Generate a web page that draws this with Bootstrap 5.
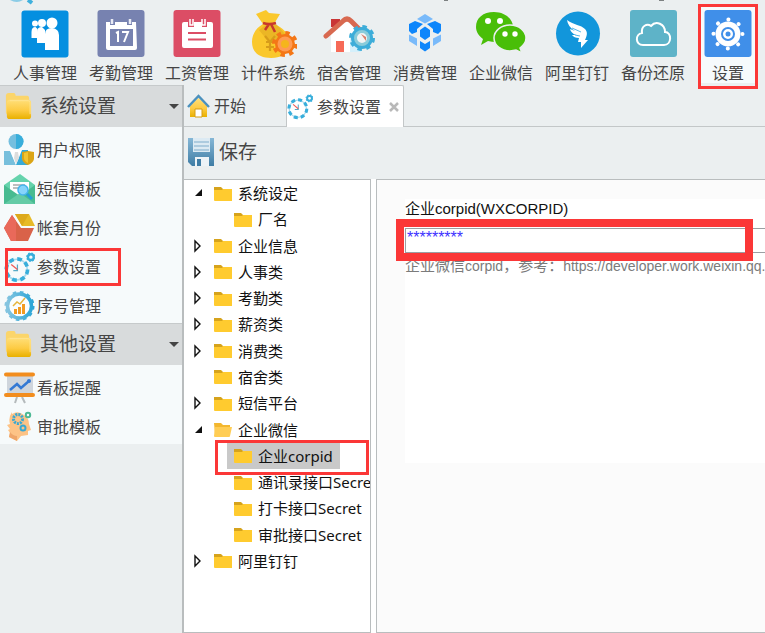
<!DOCTYPE html>
<html lang="zh-CN">
<head>
<meta charset="utf-8">
<meta name="viewport" content="width=device-width, initial-scale=1">
<title>参数设置</title>
<link href="https://cdn.jsdelivr.net/npm/bootstrap@5.3.0/dist/css/bootstrap.min.css" rel="stylesheet">
<style>
:root { --ui: "Noto Sans", "Noto Sans CJK SC", sans-serif; --line: #b9bdbe; --alert: #fb3737; }
body { font-family: var(--ui); font-size: 16px; line-height: 20px; color: #454545; background: #ebeff0; overflow: hidden; }
button, input { font: inherit; color: inherit; }
svg { display: block; flex: none; }
.plain { border: 0; background: none; padding: 0; color: inherit; white-space: nowrap; }
.marked { position: relative; }
.marked::after { content: ""; position: absolute; border: 3px solid var(--alert); pointer-events: none; z-index: 3; }
.topbar { position: relative; padding: 10px 0 0 7px; height: 85px; }
.topbar .tool { width: 76px; flex: none; }
.topbar .tool svg { margin: 0 auto 5px; }
.topbar .tool.marked { width: 60px; background: #f6fafc; margin: -6px 0 0 7px; padding-top: 6px; }
.topbar .marked::after { inset: 0 0 -6px; }
.scraps { position: absolute; left: 0; top: 0; pointer-events: none; }
.side { width: 184px; flex: none; border-right: 2px solid var(--line); }
.side-head { height: 42px; background: #d8dbdc; border-top: 1px solid #c6cacb; font-size: 19px; padding: 0 3px 2px 4px; }
.side-head + ul { background: #f6fafb; padding-bottom: 1px !important; }
.side-head svg.fold { margin-right: 7px; }
.side li button { height: 39px; padding: 7px 0 0 4px; }
.side li svg { margin-right: 2px; }
.side .marked::after { inset: 4px auto -3px 5px; width: 116px; }
.tabs { height: 42px; border-bottom: 1px solid #c3c7c8; }
.tab-item { height: 42px; }
.tab-item.current { background: #fff; border: 1px solid #c3c7c8; border-bottom: 0; border-radius: 2px 2px 0 0; }
.home { width: 102px; padding-left: 3px; }
.savebar { height: 52px; font-size: 19px; padding: 0 4px 3px; }
.panels { background: #fff; min-height: 0; }
.tree { width: 187px; flex: none; border: 1px solid var(--line); border-left: 0; overflow: hidden; color: #111; font-size: 15px; }
.tree ul { display: grid; grid-template: repeat(15, 1fr) / minmax(0, 1fr); height: 394px; }
.tree li { display: flex; align-items: center; min-height: 0; }
.twist { width: 18px; height: 20px; flex: none; margin: 0 5px; }
.node { display: flex; align-items: center; gap: 6px; height: 26px; padding: 0 7px 0 2px; }
.child { margin-left: 43px; }
.node.child { padding-left: 7px; }
.picked { background: #c9c9c9; }
.tree .marked::after { inset: -3px 1px -6px 31px; }
.detail { margin-left: 5px; border: 1px solid var(--line); border-right: 0; background: #fbfbfb; padding: 19px 0 0 28px; }
.form-area { background: #fff; height: 264px; font: 15px/20px "Liberation Sans", "Noto Sans CJK SC", sans-serif; }
.form-area label { color: #111; display: block; height: 29px; }
.field { position: relative; width: 110%; }
.field input { display: block; width: 100%; height: 25px; border: 1px solid #9b9fa3; border-radius: 0; padding: 0 1px 5px; color: #3c32ff; font-size: 16px; background: #fff; }
.focus-frame { position: absolute; inset: -9px 48px -8px -9px; border: 8px solid var(--alert); pointer-events: none; }
.hint { color: #7b7b7b; margin-top: 3px; white-space: nowrap; }
.hint span { font-size: 14px; }
.form-box { min-width: 0; }
</style>
</head>
<body class="vh-100 d-flex flex-column">
<svg width="0" height="0" class="position-absolute" aria-hidden="true">
  <defs>
    <linearGradient id="gold" x2="0" y2="1"><stop stop-color="#ffdf79"/><stop offset=".55" stop-color="#fdcb43"/><stop offset="1" stop-color="#e8b000"/></linearGradient>
    <linearGradient id="steel" x2="0" y2="1"><stop stop-color="#86b7d6"/><stop offset="1" stop-color="#3f7da5"/></linearGradient>
    <linearGradient id="sky" x2="1"><stop stop-color="#85c5e0"/><stop offset="1" stop-color="#2ca6d7"/></linearGradient>
    <symbol id="bigfolder" viewBox="0 0 30 30"><path d="M2 5q0-3 3-3h5q2 0 2 3h12q2 0 2 3v17H4q-2-1-2-3z" fill="#fbd56a"/><rect x="3" y="9" width="25" height="20" rx="3" fill="url(#gold)"/><path d="M6 10h19q2 0 2 2v12" fill="none" stroke="#ffe491"/></symbol>
    <symbol id="folder" viewBox="0 0 18 15"><path d="M0 1h7l2 2h8v4H0z" fill="#d6a31c"/><path d="M0 4h8l1-1h9v12H1q-1 0-1-1z" fill="#ffcb2f"/></symbol>
    <symbol id="folderopen" viewBox="0 0 18 15"><path d="M0 1h7l2 2h7v9H1z" fill="#f3b72f"/><path d="M1 5h17l-2 9q0 1-1 1H1q-1 0-1-1z" fill="#ffcd54"/></symbol>
    <symbol id="shut" viewBox="0 0 18 20"><path d="M6 5v10l5-5z" fill="#fff" stroke="#111" stroke-width="1.4"/></symbol>
    <symbol id="open" viewBox="0 0 18 20"><path d="M13 6v7H6z" fill="#111"/></symbol>
    <symbol id="clockgear" viewBox="0 0 30 30"><circle cx="12.5" cy="17" r="10" fill="none" stroke="#a9d9ec" stroke-width="1.5"/><circle cx="12.5" cy="17" r="10.3" fill="none" stroke="#38aedb" stroke-width="3.6" stroke-dasharray="4.6 3.49"/><path d="M13 12v6H9" fill="none" stroke="#57aac7" stroke-width="1.2"/><path d="m7 12 6 5" stroke="#f05b55" stroke-width="1.2"/><circle cx="26" cy="5" r="2.8" fill="none" stroke="#38aedb" stroke-width="2.3"/><circle cx="26" cy="5" r="4" fill="none" stroke="#38aedb" stroke-width="1.2" stroke-dasharray="1.6 1.54"/></symbol>
  </defs>
</svg>

<header class="topbar d-flex align-items-start">
  <svg class="scraps" width="680" height="6" aria-hidden="true"><path d="M10 0h13q-6 4-13 0" fill="#8bcce6"/><path d="m28 0 4 3" stroke="#3eb0dd" stroke-width="4"/><path d="M444 0h4M659 0h5" stroke="#7c8182" stroke-width="2"/></svg>
  <button class="plain tool"><svg width="48" height="48" viewBox="0 0 48 48"><rect x=".5" y=".5" width="47" height="47" rx="3" fill="#048fe0"/><g fill="#fff"><circle cx="31" cy="13" r="5.5"/><path d="M24 24q0-6 7-6 7 1 7 7v15H24z"/><circle cx="21" cy="13" r="4"/><path d="M16 22q0-5 5-5l3 3v13h-8z"/><circle cx="14" cy="13.5" r="3"/><path d="M10.5 22q0-5 4-5l2 2v9h-6z"/></g></svg>人事管理</button>
  <button class="plain tool"><svg width="48" height="48" viewBox="0 0 48 48"><rect x=".5" width="47" height="47" rx="3" fill="#7782b0"/><path d="M9 12h4v3h5v-3h12v3h5v-3h4l1 26q0 2-2 2H11q-2 0-2-2z" fill="#fff"/><path d="M13 19h23v17H13z" fill="#7782b0"/><path d="M15 9v5m18-5v5" stroke="#e8eaf4" stroke-width="2.5"/><path d="m19 23 2-1v10m4-10h6l-4 10" fill="none" stroke="#fff" stroke-width="2"/></svg>考勤管理</button>
  <button class="plain tool"><svg width="48" height="48" viewBox="0 0 48 48"><rect x=".5" width="47" height="47" rx="3" fill="#dc4d65"/><path d="M11 12h4v5h6v-5h8v5h5v-5h4q2 0 2 2v22q0 2-2 2H11q-2 0-2-2V14q0-2 2-2z" fill="#fff"/><path d="M17 9v6h3V9m9 0v6h3V9" fill="none" stroke="#fff" stroke-width="1.5"/><path d="M15 23h18M15 29.5h18" stroke="#dc4d65" stroke-width="2"/></svg>工资管理</button>
  <button class="plain tool"><svg width="48" height="48" viewBox="0 0 48 48"><path d="m7 4 5-2 5-2 3 3 11 1-6 10q15 6 16 19c0 10-8 15-19 15S3 43 3 32c0-8 4-14 11-18z" fill="#fac82c"/><path d="M18 14q4 1 9 0l9 10v7H19l-9-11z" fill="#dca41d" opacity=".5"/><path d="M14 13q6 2 13 0M20 14l-4 6m6-6 4 8" fill="none" stroke="#c8382c" stroke-width="2.5"/><path d="m16 26 5 6 5-6m-9 6h9m-9 5h8m-4-5v9" fill="none" stroke="#d79d1a" stroke-width="2.2"/><circle cx="36" cy="34" r="10" fill="#f47717"/><circle cx="36" cy="34" r="11" fill="none" stroke="#f47717" stroke-width="4" stroke-dasharray="4.32 4.32"/><circle cx="36" cy="34" r="7.5" fill="#ff9b52"/><circle cx="36" cy="34" r="4" fill="#f5b51c"/></svg>计件系统</button>
  <button class="plain tool"><svg width="52" height="48" viewBox="0 0 52 48"><path d="M8 9h9v8H8z" fill="#c93636"/><path d="M8 24 23 10l15 14v18H8z" fill="#fff"/><path d="M27 24h11v18H27z" fill="#d5f0fb"/><path d="m3 26 17-15q4-4 8 0l9 9" fill="none" stroke="#d86950" stroke-width="5" stroke-linecap="round"/><path d="M13 31h8v11h-8z" fill="#f66a57"/><circle cx="39" cy="28" r="8.5" fill="#f2f4f4" stroke="#3dadd9" stroke-width="5"/><circle cx="39" cy="28" r="11.5" fill="none" stroke="#3dadd9" stroke-width="3" stroke-dasharray="4.5 4.53"/><circle cx="39" cy="28" r="6.5" fill="none" stroke="#8accda" stroke-width="3"/><path d="m38 24 5 3v4z" fill="#d87f6b"/></svg>宿舍管理</button>
  <button class="plain tool"><svg width="48" height="48" viewBox="0 0 48 48"><g fill="#0d86fb"><path d="m8 14 6-3 8 3-6 5v3l-5 2-3-3zM40 14l-6-3-8 3 6 5v3l5 2 3-3zM24 16.500l5 3.500v6.500L24 30l-5-3.500V20zM19 31l5 3 5-3v7l-5 3.500-5-3.500z"/></g><g fill="#79bafa"><path d="m24 4 8 5-8 4.500L16 9zM8 24.500l8 4V36l-8-5zM40 24.500l-8 4V36l8-5z"/></g></svg>消费管理</button>
  <button class="plain tool"><svg width="52" height="48" viewBox="0 0 52 48"><path d="M19 2C8 2 1 8 1 17c0 5 3 9 7 12l-2 6 7-4q4 1 8 1c10 0 17-7 17-15S30 2 19 2z" fill="#49be08"/><path d="M35 15c-9 0-16 6-16 13s7 13 16 13l6-1 6 3-2-5c4-3 6-6 6-10 0-7-7-13-16-13z" fill="#49be08" stroke="#ebeff0" stroke-width="1.5"/><g fill="#fff"><circle cx="13" cy="11" r="3"/><circle cx="25" cy="11" r="3"/><circle cx="30" cy="24" r="2.7"/><circle cx="40" cy="24" r="2.7"/></g></svg>企业微信</button>
  <button class="plain tool"><svg width="48" height="48" viewBox="0 0 48 48"><circle cx="25" cy="23.5" r="22" fill="#1296db"/><path d="M14 10c7 5 14 5 18 9 3 3 2 7 0 11h3l-7 8v-6h-3l1-4q-5 0-7-3l4 0q-5-2-6-6l5 2q-7-4-8-11z" fill="#fff"/><path d="m19 18 9 4m-6 3 5 1" stroke="#1296db" stroke-width=".7"/></svg>阿里钉钉</button>
  <button class="plain tool"><svg width="48" height="48" viewBox="0 0 48 48"><rect x="1" width="47" height="47" rx="3" fill="#5eb3c8"/><path d="M14 35c-8 0-8-11-1-12-1-7 5-10 9-7 5-6 14-2 14 6 7 0 7 13-1 13z" fill="none" stroke="#fff" stroke-width="2"/></svg>备份还原</button>
  <button class="plain tool marked"><svg width="48" height="48" viewBox="0 0 48 48"><rect x=".5" width="47" height="47" rx="3" fill="#408fe9"/><circle cx="24" cy="24" r="12.5" fill="#fff"/><circle cx="24" cy="24" r="14.5" fill="none" stroke="#fff" stroke-width="4" stroke-linecap="round" stroke-dasharray=".1 11.28"/><circle cx="24" cy="24" r="6" fill="none" stroke="#408fe9" stroke-width="2"/><circle cx="24" cy="24" r="2.5" fill="#408fe9"/></svg>设置</button>
</header>

<div class="d-flex flex-fill" style="min-height:0">
  <nav class="side">
    <button class="plain side-head d-flex align-items-center w-100"><svg class="fold" width="29" height="29"><use href="#bigfolder"/></svg>系统设置<svg class="ms-auto" width="10" height="6" viewBox="0 0 10 6"><path d="M0 1h10L5 6z" fill="#444"/></svg></button>
    <ul class="list-unstyled m-0">
      <li><button class="plain d-flex align-items-center w-100"><svg width="31" height="32" viewBox="0 0 31 32"><circle cx="12" cy="7.5" r="7.5" fill="#74bfdf"/><path d="M12 0a7.5 7.5 0 0 1 0 15z" fill="#38aedb"/><path d="M0 17h6l6 14H0z" fill="#77bfdc"/><path d="M12 31V16h12v15z" fill="#37aad7"/><path d="M6 16h12l-6 15z" fill="#fff"/><path d="M11 18h3l1 6-3 6-2-6z" fill="#ddd"/><path d="m18 18 6-1 6 1v7q-1 4-6 6-5-2-6-6z" fill="#dba515"/><path d="m20 19 4-1v11q-4-2-4-5z" fill="#f2c430"/></svg>用户权限</button></li>
      <li><button class="plain d-flex align-items-center w-100"><svg width="31" height="32" viewBox="0 0 31 32"><path d="m0 12 16-11 15 11v18H0z" fill="#65d3ac"/><path d="M6 9h19v15H6z" fill="#fff"/><path d="M9 12h12M9 15h9" stroke="#aaa" stroke-width="1.5"/><path d="m0 12 16 11 15-11v19H0z" fill="#48bb91"/><path d="M0 31 16 20l15 11z" fill="#64cba6"/><circle cx="19" cy="17" r="5" fill="#86d4fb" stroke="#45b5ec" stroke-width="1.5"/><path d="m23 21 5 5" stroke="#239fd6" stroke-width="3"/></svg>短信模板</button></li>
      <li><button class="plain d-flex align-items-center w-100"><svg width="31" height="32" viewBox="0 0 31 32"><path d="m8 3 9 13h13l-6 13H7L0 16z" fill="#d96249"/><path d="M8 3 0 16l7 13h5V9z" fill="#e9695a"/><path d="M11 2h14l6 12H18z" fill="#e7ba27"/><path d="m11 2 7 12 7-12" fill="#dda91c"/></svg>帐套月份</button></li>
      <li class="marked"><button class="plain d-flex align-items-center w-100"><svg width="31" height="31"><use href="#clockgear"/></svg>参数设置</button></li>
      <li><button class="plain d-flex align-items-center w-100"><svg width="31" height="32" viewBox="0 0 31 32"><circle cx="15.5" cy="16" r="12" fill="#fafdfe" stroke="url(#sky)" stroke-width="3.5"/><circle cx="15.5" cy="16" r="13.8" fill="none" stroke="url(#sky)" stroke-width="2.5" stroke-dasharray="3.6 3.62"/><path d="M10 19h3v5h-3zm4-2h3v7h-3zm4-3h3v10h-3z" fill="#f39b20"/><path d="m9 16 4-4 3 2 5-6" fill="none" stroke="#e6b53c" stroke-width="1.5"/></svg>序号管理</button></li>
    </ul>
    <button class="plain side-head d-flex align-items-center w-100"><svg class="fold" width="29" height="29"><use href="#bigfolder"/></svg>其他设置<svg class="ms-auto" width="10" height="6" viewBox="0 0 10 6"><path d="M0 1h10L5 6z" fill="#444"/></svg></button>
    <ul class="list-unstyled m-0">
      <li><button class="plain d-flex align-items-center w-100"><svg width="31" height="32" viewBox="0 0 31 32"><path d="m13 25-2 6m7-6 3 6" stroke="#b5babc" stroke-width="2"/><path d="M3 4h26v17H3z" fill="#cfd5dc"/><path d="M2 2.500h27M2 23h27" stroke="#f28d1e" stroke-width="4" stroke-linecap="round"/><path d="m6 18 7-6 4 4 8-7" fill="none" stroke="#3479d4" stroke-width="2.5"/><circle cx="25" cy="9" r="2" fill="#3479d4"/></svg>看板提醒</button></li>
      <li><button class="plain d-flex align-items-center w-100"><svg width="31" height="32" viewBox="0 0 31 32"><path d="M8 3Q14-1 20 4q5 3 5 9l2 6-3 1v4l-7 1-4 5-8-4 1-4-2-3 2-1-3-4 3-1q-2-6 2-12z" fill="#fdc386"/><path d="M6 21q3 4 7 4v5l-8-4z" fill="#efa66a"/><circle cx="14" cy="8" r="4.5" fill="none" stroke="#39a8d2" stroke-width="3" stroke-dasharray="2 1"/><circle cx="19" cy="17" r="2.5" fill="none" stroke="#39a8d2" stroke-width="2"/><circle cx="24" cy="4" r="2.2" fill="none" stroke="#4db994" stroke-width="2"/></svg>审批模板</button></li>
    </ul>
  </nav>

  <main class="flex-fill d-flex flex-column form-box">
    <div class="tabs d-flex align-items-start">
      <button class="plain tab-item home d-flex align-items-center gap-1"><svg width="23" height="24" viewBox="0 0 23 24"><path d="M3 12 11.500 4 20 12v11H3z" fill="url(#gold)"/><path d="M8 15h7v8H8z" fill="#fff" stroke="#d69d12"/><path d="m1 13 10.500-11L22 13" fill="none" stroke="#4b91bd" stroke-width="2.5"/></svg>开始</button>
      <div class="tab-item current d-flex align-items-center pe-1"><button class="plain d-flex align-items-center gap-1"><svg width="26" height="26"><use href="#clockgear"/></svg>参数设置</button><button class="plain ms-2" aria-label="关闭"><svg width="10" height="10" viewBox="0 0 10 10"><path d="m1 1 8 8m0-8L1 9" stroke="#b9b9b9" stroke-width="2.5"/></svg></button></div>
    </div>
    <div class="savebar d-flex align-items-center"><button class="plain d-flex align-items-center gap-1"><svg width="27" height="28" viewBox="0 0 27 28"><path d="M0 0h26v28H4l-4-4z" fill="url(#steel)"/><path d="M5 0h17v14H5z" fill="#dceaf3"/><path d="M6 4h15M6 8h15M6 12h15" stroke="#7eaccb"/><path d="M7 19h14v9H7z" fill="#edf3f7"/><path d="M9 21h4v7H9z" fill="#3f7da5"/></svg>保存</button></div>
    <div class="panels flex-fill d-flex">
      <nav class="tree">
        <ul class="list-unstyled m-0">
          <li><svg class="twist"><use href="#open"/></svg><button class="plain node"><svg width="18" height="15"><use href="#folder"/></svg>系统设定</button></li>
          <li><button class="plain node child"><svg width="18" height="15"><use href="#folder"/></svg>厂名</button></li>
          <li><svg class="twist"><use href="#shut"/></svg><button class="plain node"><svg width="18" height="15"><use href="#folder"/></svg>企业信息</button></li>
          <li><svg class="twist"><use href="#shut"/></svg><button class="plain node"><svg width="18" height="15"><use href="#folder"/></svg>人事类</button></li>
          <li><svg class="twist"><use href="#shut"/></svg><button class="plain node"><svg width="18" height="15"><use href="#folder"/></svg>考勤类</button></li>
          <li><svg class="twist"><use href="#shut"/></svg><button class="plain node"><svg width="18" height="15"><use href="#folder"/></svg>薪资类</button></li>
          <li><svg class="twist"><use href="#shut"/></svg><button class="plain node"><svg width="18" height="15"><use href="#folder"/></svg>消费类</button></li>
          <li><span class="twist"></span><button class="plain node"><svg width="18" height="15"><use href="#folder"/></svg>宿舍类</button></li>
          <li><svg class="twist"><use href="#shut"/></svg><button class="plain node"><svg width="18" height="15"><use href="#folder"/></svg>短信平台</button></li>
          <li><svg class="twist"><use href="#open"/></svg><button class="plain node"><svg width="18" height="15"><use href="#folderopen"/></svg>企业微信</button></li>
          <li class="marked"><button class="plain node child picked"><svg width="18" height="15"><use href="#folder"/></svg>企业corpid</button></li>
          <li><button class="plain node child"><svg width="18" height="15"><use href="#folder"/></svg>通讯录接口Secret</button></li>
          <li><button class="plain node child"><svg width="18" height="15"><use href="#folder"/></svg>打卡接口Secret</button></li>
          <li><button class="plain node child"><svg width="18" height="15"><use href="#folder"/></svg>审批接口Secret</button></li>
          <li><svg class="twist"><use href="#shut"/></svg><button class="plain node"><svg width="18" height="15"><use href="#folder"/></svg>阿里钉钉</button></li>
        </ul>
      </nav>
      <section class="detail flex-fill form-box">
        <div class="form-area">
          <label for="corpid">企业corpid(WXCORPID)</label>
          <div class="field"><input id="corpid" type="text" value="*********"><div class="focus-frame"></div></div>
          <div class="hint">企业微信<span>corpid</span>，参考：<span>https://developer.work.weixin.qq.</span></div>
        </div>
      </section>
    </div>
  </main>
</div>
<script src="https://cdn.jsdelivr.net/npm/bootstrap@5.3.0/dist/js/bootstrap.bundle.min.js"></script>
</body>
</html>
